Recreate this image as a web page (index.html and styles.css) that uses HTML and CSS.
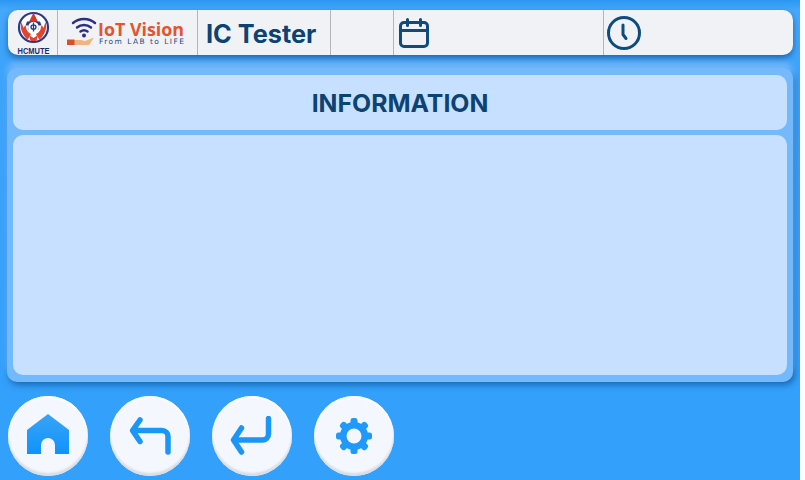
FILE: index.html
```html
<!DOCTYPE html>
<html lang="en">
<head>
<meta charset="utf-8">
<title>IC Tester</title>
<link rel="stylesheet" href="styles.css">
</head>
<body>
<div class="app">
  <header class="topbar">
    <div class="cell cell-school">
      <svg width="46" height="45" viewBox="0 0 46 45" class="logo">
        <circle cx="25.500" cy="17.500" r="14.500" fill="#fff" stroke="#2b3a86" stroke-width="2.200"/>
        <path d="M25.500 2.500l4.500 9.500h-9z" fill="#d9362b"/>
        <path d="M19 11.500h13l1.500 4h-3v4h-10v-4h-3z" fill="#2b3a86"/>
        <circle cx="25.500" cy="17" r="5.300" fill="#fff"/>
        <path d="M25.500 12.500v9M23 17a2.500 2.200 0 0 1 5 0a2.500 2.200 0 0 1-5 0" fill="none" stroke="#2b3a86" stroke-width="1.300"/>
        <path d="M13.500 12c-2 6 .5 12 6 18l3.500-6c-3-1.500-5-4-5-7.500l-1-1-1.500 2.500zM37.500 12c2 6-.5 12-6 18l-3.500-6c3-1.500 5-4 5-7.500l1-1 1.500 2.500z" fill="#e2452f"/>
        <path d="M21 25l4.500 3 4.500-3-1.500 6h-6z" fill="#e2452f"/>
        <text x="25.500" y="44" text-anchor="middle" textLength="32" lengthAdjust="spacingAndGlyphs" class="school-name">HCMUTE</text>
      </svg>
    </div>
    <div class="cell cell-brand">
      <svg width="122" height="36" viewBox="0 0 122 36" class="logo">
        <path d="M6 8a17 17 0 0 1 22 0M10 12.500a11 11 0 0 1 14 0M13.500 16.500a6 6 0 0 1 7 0" fill="none" stroke="#2b2f86" stroke-width="2.500" stroke-linecap="round"/>
        <circle cx="17" cy="20.500" r="2" fill="#2b2f86"/>
        <path d="M7 25h7l4 1 9-3.500-5 7.500h-15z" fill="#f3b483"/>
        <rect x="0" y="24.500" width="7.500" height="5.500" fill="#d9502c"/>
        <text x="31" y="20.500" textLength="86" lengthAdjust="spacingAndGlyphs" class="brand-name">IoT Vision</text>
        <text x="32" y="28.500" textLength="85" lengthAdjust="spacing" class="brand-tag">From LAB to LIFE</text>
      </svg>
    </div>
    <div class="cell cell-title">IC Tester</div>
    <div class="cell cell-empty"></div>
    <div class="cell cell-date">
      <svg width="32" height="32" viewBox="0 0 32 32" class="glyph">
        <rect x="2.500" y="5.500" width="27" height="24" rx="3.500"/>
        <path d="M2.500 13.500h27M9.500 2.500v6M22.500 2.500v6"/>
      </svg>
    </div>
    <div class="cell cell-clock">
      <svg width="34" height="34" viewBox="0 0 34 34" class="glyph">
        <circle cx="17" cy="17" r="15.500"/>
        <path d="M16 9v9.500l3 4"/>
      </svg>
    </div>
  </header>

  <main class="panel">
    <div class="card card-head">INFORMATION</div>
    <div class="card card-body"></div>
  </main>

  <nav class="actions">
    <button class="round" aria-label="Home">
      <svg width="42" height="40" viewBox="0 0 42 40" class="home-icon">
        <defs>
          <linearGradient id="blue" x1="0" y1="0" x2="0" y2="1">
            <stop offset="0" stop-color="#3aa3f3"/>
            <stop offset="1" stop-color="#0f93ff"/>
          </linearGradient>
        </defs>
        <path d="M21 0L42 16V40H28V31a7 7 0 0 0-14 0V40H0V16z" fill="url(#blue)"/>
      </svg>
    </button>
    <button class="round" aria-label="Back">
      <svg width="44" height="40" viewBox="0 0 44 40" class="arrow">
        <path d="M12 4l-7.500 10.500 7.500 11M5 14.500h29a6 6 0 0 1 6 6v15.500"/>
      </svg>
    </button>
    <button class="round" aria-label="Enter">
      <svg width="44" height="40" viewBox="0 0 44 40" class="arrow">
        <path d="M11.500 12l-8 12 8 12M4 24h28.500a6 6 0 0 0 6-6v-15.500"/>
      </svg>
    </button>
    <button class="round" aria-label="Settings">
      <svg width="38" height="38" viewBox="0 0 38 38" class="gear">
        <circle cx="19" cy="19" r="14"/>
        <g>
          <rect x="15.500" y="1" width="7" height="36" rx="2.500"/>
          <rect x="15.500" y="1" width="7" height="36" rx="2.500" transform="rotate(45 19 19)"/>
          <rect x="15.500" y="1" width="7" height="36" rx="2.500" transform="rotate(90 19 19)"/>
          <rect x="15.500" y="1" width="7" height="36" rx="2.500" transform="rotate(135 19 19)"/>
        </g>
        <circle cx="19" cy="19" r="7.500" class="gear-hole"/>
      </svg>
    </button>
  </nav>
</div>
</body>
</html>
```
FILE: styles.css
```css
html, body {
  margin: 0;
  padding: 0;
  background: #fff;
}

.app {
  width: 800px;
  height: 480px;
  box-sizing: border-box;
  padding: 10px 7px 4px 7px;
  display: flex;
  flex-direction: column;
  overflow: hidden;
  background: linear-gradient(#2b97f3 0, #46a8fb 10px, #3da4fa 60px, #33a0fb 385px);
  font-family: Inter, "Liberation Sans", sans-serif;
}

.topbar {
  height: 45px;
  margin-left: 1px;
  display: flex;
  position: relative;
  z-index: 1;
  background: #f1f2f6;
  border-radius: 10px;
  box-shadow: 0 3px 6px rgba(5, 60, 120, 0.6);
  flex: none;
}

.cell {
  display: flex;
  align-items: center;
  box-sizing: border-box;
  border-right: 1px solid #b4b6ba;
  flex: none;
}

.cell-school { width: 50px; padding-left: 0; }
.cell-brand { width: 140px; padding-left: 9px; }
.cell-title { width: 133px; padding: 2px 0 0 8px; font-size: 25.300px; font-weight: 700; color: #0d4373; }
.cell-empty { width: 63px; }
.cell-date { width: 210px; padding-left: 4px; }
.cell-clock { flex: 1; border-right: 0; padding-left: 3px; }

.logo { display: block; overflow: visible; }

.school-name {
  font-family: "Liberation Sans", sans-serif;
  font-size: 9.200px;
  font-weight: 700;
  fill: #1d2b6e;
}

.brand-name {
  font-family: "Open Sans", sans-serif;
  font-size: 18.500px;
  font-weight: 700;
  fill: #e2552f;
}

.brand-tag {
  font-family: "DejaVu Sans", sans-serif;
  font-size: 7.500px;
  fill: #2f4a78;
}

.glyph {
  display: block;
  fill: none;
  stroke: #0d4c7f;
  stroke-width: 3;
  stroke-linecap: round;
  stroke-linejoin: round;
}

.panel {
  height: 314px;
  margin-top: 13px;
  padding: 7px 6px;
  box-sizing: border-box;
  display: flex;
  flex-direction: column;
  gap: 5px;
  background: #74b9fb;
  border-radius: 10px;
  box-shadow: 0 -7px 6px rgba(116, 185, 251, 0.85), 2px 3px 6px rgba(5, 60, 120, 0.55);
  flex: none;
}

.card {
  background: #c7e0ff;
  border-radius: 10px;
}

.card-head {
  height: 55px;
  flex: none;
  display: flex;
  align-items: center;
  justify-content: center;
  font-size: 24.800px;
  font-weight: 700;
  color: #0d4373;
}

.card-body { flex: 1; }

.actions {
  margin-top: 14px;
  margin-left: 1px;
  display: flex;
  gap: 22px;
}

.round {
  width: 80px;
  height: 80px;
  padding: 0;
  border: 0;
  border-radius: 50%;
  display: flex;
  align-items: center;
  justify-content: center;
  background: #f4f7fd;
  box-shadow: inset 0 -3px 2px #d9dde4, inset 0 2px 2px #fff;
  flex: none;
}

.home-icon { margin-bottom: 4px; }

.arrow {
  fill: none;
  stroke: #1a96f5;
  stroke-width: 5.500;
  stroke-linecap: round;
  stroke-linejoin: round;
}

.gear { margin-bottom: 1px; fill: #1f99fa; }
.gear .gear-hole { fill: #f4f7fd; }
```
